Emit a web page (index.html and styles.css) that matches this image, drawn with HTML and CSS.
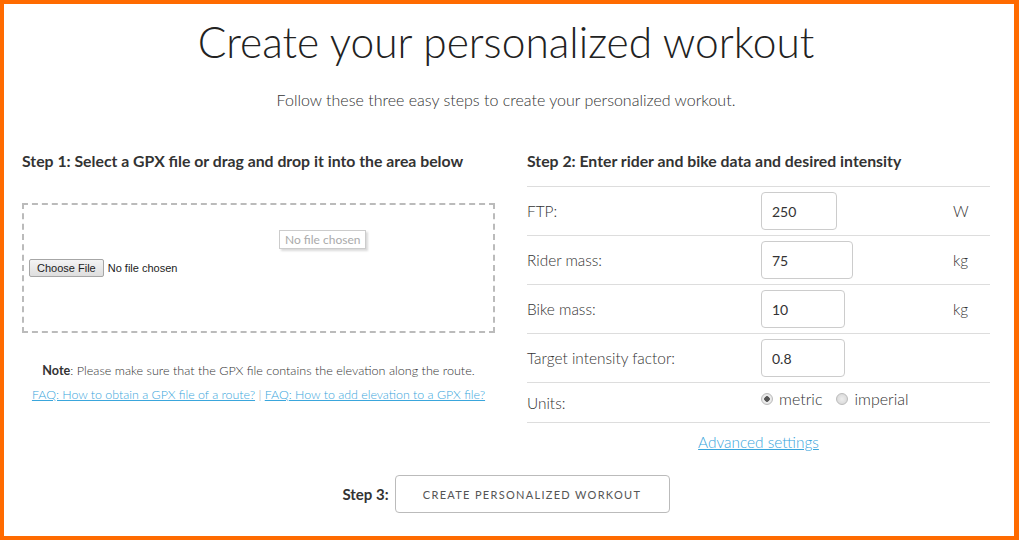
FILE: index.html
```html
<!DOCTYPE html>
<html>
  <head>
    <title>Create your personalized workout</title>
    <meta charset="UTF-8">
    <meta name="viewport" content="width=device-width, initial-scale=1.0">
    <link rel="stylesheet" href="styles.css">
  </head>
  <body>
    <div class="frame">
      <h1>Create your personalized workout</h1>
      <p class="lead">Follow these three easy steps to create your personalized workout.</p>

      <div class="steps">
        <div class="step-one">
          <h2>Step 1: Select a GPX file or drag and drop it into the area below</h2>
          <div class="dropzone">
            <label class="file-input">
              <span class="file-button">Choose File</span>
              <span class="file-name">No file chosen</span>
            </label>
            <span class="file-tip">No file chosen</span>
          </div>
          <p class="note"><b>Note</b>: Please make sure that the GPX file contains the elevation along the route.</p>
          <p class="faq">
            <a href="#">FAQ: How to obtain a GPX file of a route?</a> | <a href="#">FAQ: How to add elevation to a GPX file?</a>
          </p>
        </div>

        <div class="step-two">
          <h2>Step 2: Enter rider and bike data and desired intensity</h2>
          <div class="rider-table">
            <div class="row">
              <label for="ftp">FTP:</label>
              <input type="text" id="ftp" class="num w76" value="250">
              <span class="unit">W</span>
            </div>
            <div class="row">
              <label for="rider-mass">Rider mass:</label>
              <input type="text" id="rider-mass" class="num w92" value="75">
              <span class="unit">kg</span>
            </div>
            <div class="row">
              <label for="bike-mass">Bike mass:</label>
              <input type="text" id="bike-mass" class="num w84" value="10">
              <span class="unit">kg</span>
            </div>
            <div class="row">
              <label for="intensity">Target intensity factor:</label>
              <input type="text" id="intensity" class="num w84" value="0.8">
              <span class="unit"></span>
            </div>
            <div class="row units-row">
              <label>Units:</label>
              <div class="radios">
                <label class="radio"><input type="radio" name="units" checked> metric</label>
                <label class="radio"><input type="radio" name="units"> imperial</label>
              </div>
              <span class="unit"></span>
            </div>
          </div>
          <div class="advanced"><a href="#">Advanced settings</a></div>
        </div>
      </div>

      <div class="step-three">
        <span class="step-label">Step 3:</span>
        <button type="button" class="create-btn">Create personalized workout</button>
      </div>
    </div>
  </body>
</html>
```
FILE: styles.css
```css
/* Workout creator page */
* {
  box-sizing: border-box;
}

body {
  margin: 0;
  padding: 0;
  font-family: "Lato", "Open Sans", sans-serif;
  color: #333;
  background-color: #fff;
}

.frame {
  width: 1019px;
  height: 540px;
  border: 4px solid #ff6b00;
  border-right-width: 5px;
  padding: 0 24px 0 18px;
  overflow: hidden;
}

h1 {
  margin: 14px 0 0;
  text-align: center;
  font-size: 42.5px;
  font-weight: 300;
  line-height: 48px;
  color: #222;
}

.lead {
  margin: 24px 0 0;
  text-align: center;
  font-size: 16px;
  font-weight: 300;
  line-height: 20px;
  color: #333;
}

.steps {
  display: flex;
  gap: 32px;
  margin-top: 41px;
}

.step-one {
  width: 473px;
}

.step-two {
  flex: 1;
}

h2 {
  margin: 0;
  font-size: 15.8px;
  font-weight: 700;
  line-height: 20px;
  white-space: nowrap;
  color: #333;
}

/* drop area */
.dropzone {
  position: relative;
  margin-top: 32px;
  height: 130px;
  border: 2px dashed #bbb;
  display: flex;
  align-items: center;
  padding-left: 5px;
}

.file-input {
  display: flex;
  align-items: center;
  gap: 4px;
  font-family: "Liberation Sans", Arial, sans-serif;
  font-size: 11px;
  color: #222;
}

.file-button {
  padding: 2px 7px;
  border: 1px solid #a6a6a6;
  border-radius: 2px;
  background: linear-gradient(#f4f4f4, #dedede);
  line-height: 12px;
}

.file-tip {
  position: absolute;
  left: 255px;
  top: 25px;
  padding: 2px 5px;
  border: 1px solid #ccc;
  background-color: #fff;
  box-shadow: 2px 2px 2px rgba(0, 0, 0, 0.15);
  font-size: 12px;
  line-height: 13px;
  color: #aaa;
}

.note {
  margin: 30px 0 0;
  text-align: center;
  font-size: 12.6px;
  font-weight: 300;
  line-height: 16px;
  white-space: nowrap;
}

.note b {
  font-weight: 700;
}

.faq {
  margin: 8px 0 0;
  text-align: center;
  font-size: 12.4px;
  font-weight: 300;
  line-height: 16px;
  white-space: nowrap;
  color: #999;
}

a {
  color: #3aa6dc;
}

/* rider data */
.rider-table {
  margin-top: 15px;
  border-bottom: 1px solid #ddd;
}

.row {
  display: grid;
  grid-template-columns: 234px 192px 1fr;
  align-items: center;
  height: 49px;
  border-top: 1px solid #ddd;
  font-size: 15.4px;
  font-weight: 300;
  color: #333;
}

.units-row {
  height: 40px;
}

.num {
  height: 38px;
  padding: 0 10px;
  border: 1px solid #ccc;
  border-radius: 4px;
  font-family: inherit;
  font-size: 14px;
  color: #333;
}

.w76 { width: 76px; }
.w92 { width: 92px; }
.w84 { width: 84px; }

.radios {
  display: flex;
  gap: 14px;
  margin-top: -8px;
  font-size: 16px;
}

.radio {
  display: flex;
  align-items: center;
  gap: 6px;
}

.radio input {
  appearance: none;
  margin: 0;
  width: 12px;
  height: 12px;
  border-radius: 50%;
  border: 1px solid #bbb;
  background: radial-gradient(circle, #eee 0, #d4d4d4 100%);
}

.radio input:checked {
  background: radial-gradient(circle, #555 0, #555 2.5px, #eee 3px, #ddd 100%);
}

.advanced {
  margin-top: 9px;
  text-align: center;
  font-size: 15.4px;
  font-weight: 300;
  line-height: 20px;
}

/* step three */
.step-three {
  display: flex;
  justify-content: center;
  align-items: center;
  gap: 6px;
  margin-top: 23px;
}

.step-label {
  font-size: 15px;
  font-weight: 700;
}

.create-btn {
  width: 275px;
  height: 38px;
  border: 1px solid #bbb;
  border-radius: 4px;
  background-color: #fff;
  font-family: inherit;
  font-size: 11px;
  letter-spacing: 1.3px;
  text-transform: uppercase;
  color: #555;
}
```
